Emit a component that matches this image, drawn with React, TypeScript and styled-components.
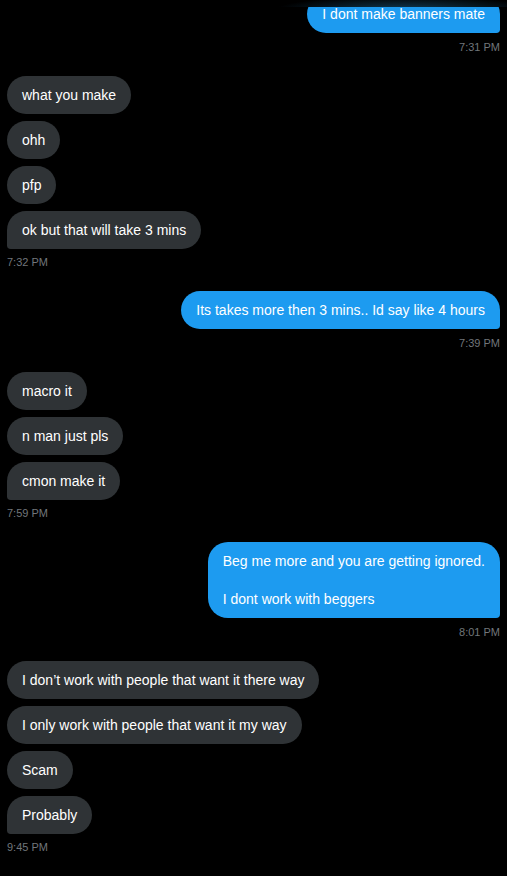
import React from 'react'
import styled, { createGlobalStyle, css } from 'styled-components'

const GlobalStyle = createGlobalStyle`
	html, body {
		margin: 0;
		padding: 0;
		background: #000;
	}
	body {
		font-family: 'Liberation Sans', Arial, sans-serif;
		-webkit-font-smoothing: antialiased;
	}
`

const Root = styled.div`
	position: relative;
	width: 507px;
	height: 876px;
	overflow: hidden;
	background: #000;
`

const HeaderBlur = styled.div`
	position: absolute;
	top: 0;
	left: 0;
	right: 0;
	height: 7px;
	z-index: 2;
	background:
		radial-gradient(ellipse 130px 14px at 405px 10px, rgba(20, 70, 100, 0.85), rgba(0, 0, 0, 0) 100%),
		#000;
`

const Thread = styled.div`
	display: flex;
	flex-direction: column;
	padding: 0 7px;
	margin-top: -5px;
`

type Side = 'in' | 'out'

const Group = styled.div<{ $side: Side }>`
	display: flex;
	flex-direction: column;
	align-items: ${p => (p.$side === 'out' ? 'flex-end' : 'flex-start')};
	gap: 7px;
	margin-bottom: 21px;
`

const Bubble = styled.div<{ $side: Side; $last?: boolean }>`
	max-width: 330px;
	padding: 10px 15px 9px;
	font-size: 14px;
	line-height: 19px;
	color: #fff;
	border-radius: 20px;
	white-space: pre-wrap;
	background: ${p => (p.$side === 'out' ? '#1d9bf0' : '#2f3336')};
	${p =>
		p.$last &&
		(p.$side === 'out'
			? css`
					border-bottom-right-radius: 4px;
			  `
			: css`
					border-bottom-left-radius: 4px;
			  `)}
`

const Time = styled.div`
	margin-top: -1.5px;
	font-size: 11px;
	line-height: 16px;
	color: #71767b;
`

type Msg = { side: Side; lines: string[]; time: string }

const thread: Msg[] = [
	{ side: 'out', lines: ['I dont make banners mate'], time: '7:31 PM' },
	{
		side: 'in',
		lines: ['what you make', 'ohh', 'pfp', 'ok but that will take 3 mins'],
		time: '7:32 PM',
	},
	{ side: 'out', lines: ['Its takes more then 3 mins.. Id say like 4 hours'], time: '7:39 PM' },
	{ side: 'in', lines: ['macro it', 'n man just pls', 'cmon make it'], time: '7:59 PM' },
	{
		side: 'out',
		lines: ['Beg me more and you are getting ignored.\n\nI dont work with beggers'],
		time: '8:01 PM',
	},
	{
		side: 'in',
		lines: [
			'I don’t work with people that want it there way',
			'I only work with people that want it my way',
			'Scam',
			'Probably',
		],
		time: '9:45 PM',
	},
]

const App = () => (
	<Root>
		<GlobalStyle />
		<HeaderBlur />
		<Thread>
			{thread.map((m, i) => (
				<Group key={i} $side={m.side}>
					{m.lines.map((t, j) => (
						<Bubble key={j} $side={m.side} $last={j === m.lines.length - 1}>
							{t}
						</Bubble>
					))}
					<Time>{m.time}</Time>
				</Group>
			))}
		</Thread>
	</Root>
)

export default App
